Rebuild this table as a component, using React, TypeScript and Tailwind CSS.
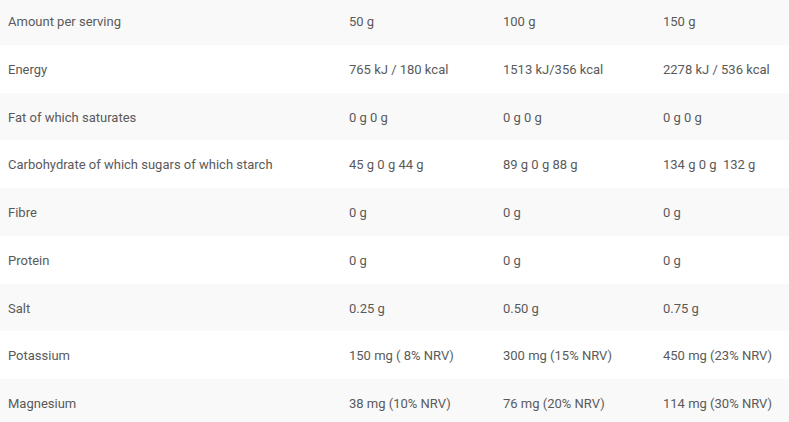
import React from "react";

const rows: string[][] = [
  ["Amount per serving", "50 g", "100 g", "150 g"],
  ["Energy", "765 kJ / 180 kcal", "1513 kJ/356 kcal", "2278 kJ / 536 kcal"],
  ["Fat of which saturates", "0 g 0 g", "0 g 0 g", "0 g 0 g"],
  ["Carbohydrate of which sugars of which starch", "45 g 0 g 44 g", "89 g 0 g 88 g", "134 g 0 g  132 g"],
  ["Fibre", "0 g", "0 g", "0 g"],
  ["Protein", "0 g", "0 g", "0 g"],
  ["Salt", "0.25 g", "0.50 g", "0.75 g"],
  ["Potassium", "150 mg ( 8% NRV)", "300 mg (15% NRV)", "450 mg (23% NRV)"],
  ["Magnesium", "38 mg (10% NRV)", "76 mg (20% NRV)", "114 mg (30% NRV)"],
];

export default function App() {
  return (
    <div
      className="w-[789px] h-[422px] overflow-hidden bg-white text-[13px] text-[#5a5a5a]"
      style={{ fontFamily: "Roboto, 'Liberation Sans', sans-serif" }}
    >
      <div className="-mt-[3px] flex flex-col">
        {rows.map((r, i) => (
          <div
            key={i}
            className={`grid grid-cols-[341px_154px_160px_134px] h-[47.75px] items-center ${
              i % 2 === 0 ? "bg-[#f9f9f9]" : "bg-white"
            }`}
          >
            {r.map((c, j) => (
              <div key={j} className="px-2 pt-[2px] whitespace-pre">
                {c}
              </div>
            ))}
          </div>
        ))}
      </div>
    </div>
  );
}
